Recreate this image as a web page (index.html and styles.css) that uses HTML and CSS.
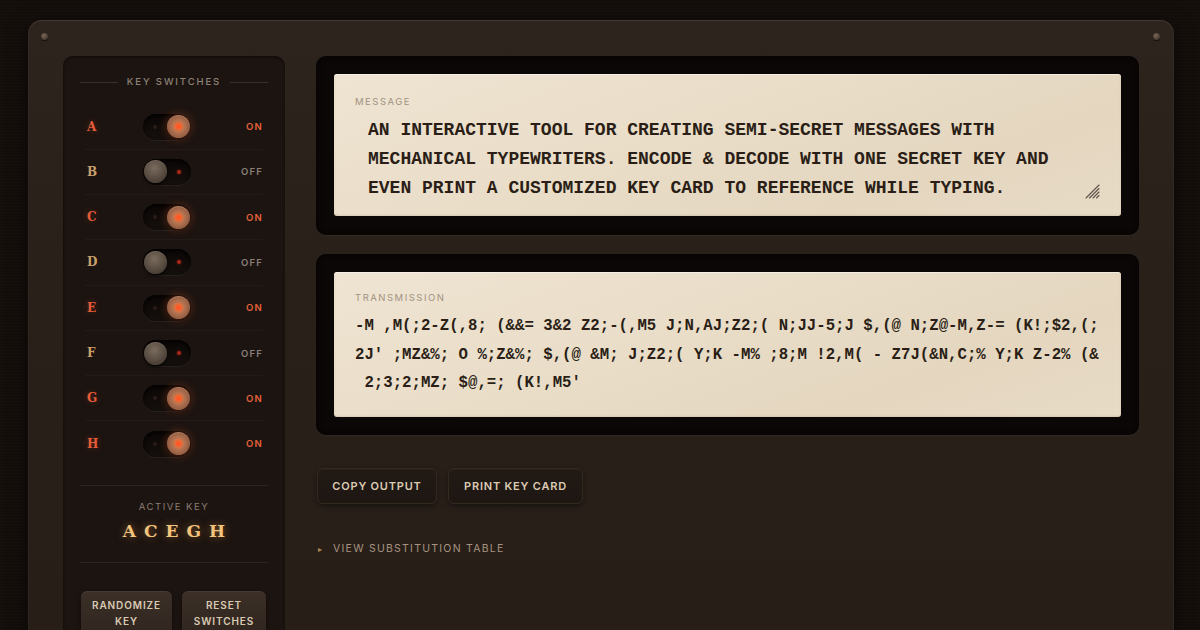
FILE: index.html
```html
<!DOCTYPE html>
<html>
<head>
<meta charset="utf-8">
<link rel="stylesheet" href="styles.css">
</head>
<body>
<div class="frame">
  <span class="screw screw-l"></span>
  <span class="screw screw-r"></span>
  <aside class="sidebar">
    <div class="side-head"><span class="rule"></span><span class="side-title">KEY SWITCHES</span><span class="rule"></span></div>
    <div class="rows">
      <div class="row on"><span class="letter">A</span><span class="toggle"><span class="dot"></span><span class="knob"></span></span><span class="state">ON</span></div>
      <div class="row off"><span class="letter">B</span><span class="toggle"><span class="dot"></span><span class="knob"></span></span><span class="state">OFF</span></div>
      <div class="row on"><span class="letter">C</span><span class="toggle"><span class="dot"></span><span class="knob"></span></span><span class="state">ON</span></div>
      <div class="row off"><span class="letter">D</span><span class="toggle"><span class="dot"></span><span class="knob"></span></span><span class="state">OFF</span></div>
      <div class="row on"><span class="letter">E</span><span class="toggle"><span class="dot"></span><span class="knob"></span></span><span class="state">ON</span></div>
      <div class="row off"><span class="letter">F</span><span class="toggle"><span class="dot"></span><span class="knob"></span></span><span class="state">OFF</span></div>
      <div class="row on"><span class="letter">G</span><span class="toggle"><span class="dot"></span><span class="knob"></span></span><span class="state">ON</span></div>
      <div class="row on"><span class="letter">H</span><span class="toggle"><span class="dot"></span><span class="knob"></span></span><span class="state">ON</span></div>
    </div>
    <div class="active">
      <div class="active-label">ACTIVE KEY</div>
      <div class="active-key">ACEGH</div>
    </div>
    <div class="side-btns">
      <button class="side-btn">RANDOMIZE<br>KEY</button>
      <button class="side-btn">RESET<br>SWITCHES</button>
    </div>
  </aside>
  <main class="main">
    <section class="bezel bezel-msg">
      <div class="paper paper-msg">
        <div class="paper-label">MESSAGE</div>
        <div class="msg-text">AN INTERACTIVE TOOL FOR CREATING SEMI-SECRET MESSAGES WITH<br>MECHANICAL TYPEWRITERS. ENCODE &amp; DECODE WITH ONE SECRET KEY AND<br>EVEN PRINT A CUSTOMIZED KEY CARD TO REFERENCE WHILE TYPING.</div>
        <svg class="grip" width="16" height="16" viewBox="0 0 16 16"><g stroke="#5a5048" stroke-width="1.1" stroke-linecap="round"><line x1="2" y1="15" x2="15" y2="2"/><line x1="5.5" y1="15" x2="15" y2="5.5"/><line x1="9" y1="15" x2="15" y2="9"/><line x1="12.5" y1="15" x2="15" y2="12.5"/></g></svg>
      </div>
    </section>
    <section class="bezel bezel-tx">
      <div class="paper paper-tx">
        <div class="paper-label">TRANSMISSION</div>
        <div class="tx-text">-M ,M(;2-Z(,8; (&amp;&amp;= 3&amp;2 Z2;-(,M5 J;N,AJ;Z2;( N;JJ-5;J $,(@ N;Z@-M,Z-= (K!;$2,(;
2J' ;MZ&amp;%; O %;Z&amp;%; $,(@ &amp;M; J;Z2;( Y;K -M% ;8;M !2,M( - Z7J(&amp;N,C;% Y;K Z-2% (&amp;
 2;3;2;MZ; $@,=; (K!,M5'</div>
      </div>
    </section>
    <div class="actions">
      <button class="act-btn act-copy">COPY OUTPUT</button>
      <button class="act-btn act-print">PRINT KEY CARD</button>
    </div>
    <div class="details"><span class="tri">&#9656;</span><span class="details-text">VIEW SUBSTITUTION TABLE</span></div>
  </main>
</div>
</body>
</html>
```

FILE: styles.css
```css
* { box-sizing: border-box; }
html, body { margin: 0; padding: 0; }
body {
  width: 1200px;
  height: 630px;
  overflow: hidden;
  background: #140e0b;
  background-image: repeating-linear-gradient(0deg, rgba(255,255,255,0.012) 0 1px, transparent 1px 3px);
  font-family: Inter, "Noto Sans", sans-serif;
}
.frame {
  position: relative;
  margin: 20px 26px 0 28px;
  height: 640px;
  background: linear-gradient(180deg, #2e241e 0%, #2a201a 40%, #271e18 100%);
  border-radius: 14px 14px 0 0;
  box-shadow: inset 0 1px 0 rgba(255,255,255,0.07), inset 0 0 0 1px rgba(255,255,255,0.03), 0 4px 20px rgba(0,0,0,0.6);
  padding: 36px 35px 0 35px;
  display: grid;
  grid-template-columns: 222px 1fr;
  column-gap: 31px;
  align-items: start;
}
.screw {
  position: absolute;
  top: 13px;
  width: 7px;
  height: 7px;
  border-radius: 50%;
  background: radial-gradient(circle at 40% 35%, #7a6858 0%, #4e4036 60%, #2e241e 100%);
  box-shadow: 0 1px 1px rgba(0,0,0,0.6);
}
.screw-l { left: 13px; }
.screw-r { right: 14px; }

/* sidebar */
.sidebar {
  height: 600px;
  background: #1c1411;
  border-radius: 10px 10px 0 0;
  box-shadow: inset 0 1px 3px rgba(0,0,0,0.6), 0 1px 0 rgba(255,255,255,0.03);
  padding: 20px 17px 0;
}
.side-head {
  display: flex;
  align-items: center;
  gap: 9px;
  height: 12px;
}
.rule { flex: 1; height: 1px; background: #3a2e26; }
.side-title {
  font-size: 9.5px;
  line-height: 12px;
  letter-spacing: 1.9px;
  color: #8e8276;
  font-weight: 500;
}
.rows { margin-top: 15.4px; padding: 0 5px; }
.row {
  height: 45.3px;
  display: flex;
  align-items: center;
  border-top: 1px solid #241b16;
}
.row:first-child { border-top-color: transparent; }
.letter {
  width: 58px;
  padding-left: 2px;
  font-family: "DejaVu Serif", "Liberation Serif", serif;
  font-weight: bold;
  font-size: 12px;
}
.on .letter { color: #e65c38; text-shadow: 0 0 6px rgba(230,90,50,0.35); }
.off .letter { color: #c9a06c; }
.toggle {
  position: relative;
  width: 48px;
  height: 26px;
  border-radius: 13px;
  background: linear-gradient(180deg, #0b0706, #15100d);
  box-shadow: inset 0 2px 4px rgba(0,0,0,0.9), 0 1px 0 rgba(255,255,255,0.05);
}
.knob {
  position: absolute;
  top: 1.5px;
  width: 23px;
  height: 23px;
  border-radius: 50%;
}
.on .knob {
  right: 1px;
  background: radial-gradient(circle at 50% 50%, #ff5a28 0 2px, #e0703e 3.5px, #b47452 6px, #9a6246 10px, #6e4331 100%);
  box-shadow: 0 0 10px rgba(220,90,40,0.45), 0 2px 3px rgba(0,0,0,0.6), inset 0 1px 1px rgba(255,220,190,0.25);
}
.off .knob {
  left: 1px;
  background: radial-gradient(circle at 45% 35%, #7a6c5e 0%, #5a4d42 50%, #3a3029 100%);
  box-shadow: 0 2px 3px rgba(0,0,0,0.7), inset 0 1px 1px rgba(255,240,220,0.12);
}
.dot {
  position: absolute;
  top: 11px;
  width: 4px;
  height: 4px;
  border-radius: 50%;
}
.on .dot { left: 10px; background: #2a1d18; }
.off .dot { right: 10px; background: #a8281a; box-shadow: 0 0 3px rgba(200,40,20,0.6); }
.state {
  flex: 1;
  text-align: right;
  font-size: 9.5px;
  font-weight: 600;
  letter-spacing: 1.2px;
}
.on .state { color: #e4623c; }
.off .state { color: #8a8078; }

.active {
  margin-top: 19px;
  border-top: 1px solid #2e241e;
  border-bottom: 1px solid #2e241e;
  padding: 15px 0 19px;
  text-align: center;
}
.active-label {
  font-size: 9.5px;
  line-height: 12px;
  letter-spacing: 1.5px;
  color: #8a7e72;
}
.active-key {
  margin-top: 6px;
  font-family: "DejaVu Serif", "Liberation Serif", serif;
  font-weight: bold;
  font-size: 17px;
  line-height: 24px;
  letter-spacing: 8px;
  padding-left: 8px;
  color: #f2c47e;
  text-shadow: 0 0 8px rgba(230,150,60,0.55);
}
.side-btns {
  margin-top: 28px;
  padding-left: 1px;
  display: grid;
  grid-template-columns: 91px 84px;
  column-gap: 10px;
  align-items: start;
}
.side-btn {
  border: none;
  border-radius: 6px;
  background: linear-gradient(180deg, #3b2f27, #30261f);
  box-shadow: inset 0 1px 0 rgba(255,255,255,0.06), 0 2px 4px rgba(0,0,0,0.5);
  color: #dac9b2;
  font-family: Inter, sans-serif;
  font-size: 10px;
  font-weight: 600;
  letter-spacing: 0.9px;
  line-height: 16px;
  padding: 6px 0 8px;
  text-align: center;
}

/* main */
.main { display: flex; flex-direction: column; }
.bezel {
  background: #0b0706;
  border-radius: 10px;
  box-shadow: 0 1px 0 rgba(255,255,255,0.04), inset 0 0 6px rgba(0,0,0,0.8);
}
.bezel-msg { padding: 18px 18px 19px; }
.bezel-tx { margin-top: 19px; padding: 18px; }
.paper {
  position: relative;
  border-radius: 3px;
  background: linear-gradient(160deg, #efe4d2 0%, #e9ddc8 45%, #e4d6bf 75%, #e8dbc6 100%);
  box-shadow: inset 0 1px 0 rgba(255,255,255,0.5), inset 0 -1px 2px rgba(120,90,60,0.15);
}
.paper-msg { padding: 22px 21px 14px; }
.paper-tx { padding: 20px 21px 19px; }
.paper-label {
  font-size: 9.5px;
  line-height: 12px;
  letter-spacing: 1.5px;
  color: #a09282;
}
.msg-text {
  margin-top: 8px;
  padding-left: 13px;
  font-family: "Liberation Mono", monospace;
  font-weight: bold;
  font-size: 18px;
  line-height: 28.8px;
  color: #2a1e16;
  white-space: nowrap;
}
.tx-text {
  margin-top: 8px;
  font-family: "Liberation Mono", monospace;
  font-weight: bold;
  font-size: 15.7px;
  line-height: 28.5px;
  color: #2a1e16;
  white-space: pre;
}
.grip {
  position: absolute;
  right: 21px;
  bottom: 17px;
}
.actions {
  margin-top: 33px;
  display: flex;
  gap: 11px;
  padding-left: 1px;
}
.act-btn {
  height: 36px;
  border: 1px solid #35291f;
  border-radius: 6px;
  background: linear-gradient(180deg, #221a15, #1d1612);
  box-shadow: 0 2px 5px rgba(0,0,0,0.45), inset 0 1px 0 rgba(255,255,255,0.03);
  color: #dccbb3;
  font-family: Inter, sans-serif;
  font-size: 11px;
  font-weight: 600;
  letter-spacing: 0.8px;
  padding: 0;
  white-space: nowrap;
  text-align: center;
}
.act-copy { width: 120px; }
.act-print { width: 135px; }
.details {
  margin-top: 38px;
  display: flex;
  align-items: center;
  height: 14px;
  padding-left: 2px;
}
.tri { color: #b08850; font-size: 8px; width: 15px; }
.details-text {
  font-size: 10.5px;
  letter-spacing: 1.25px;
  color: #a69481;
}
```
